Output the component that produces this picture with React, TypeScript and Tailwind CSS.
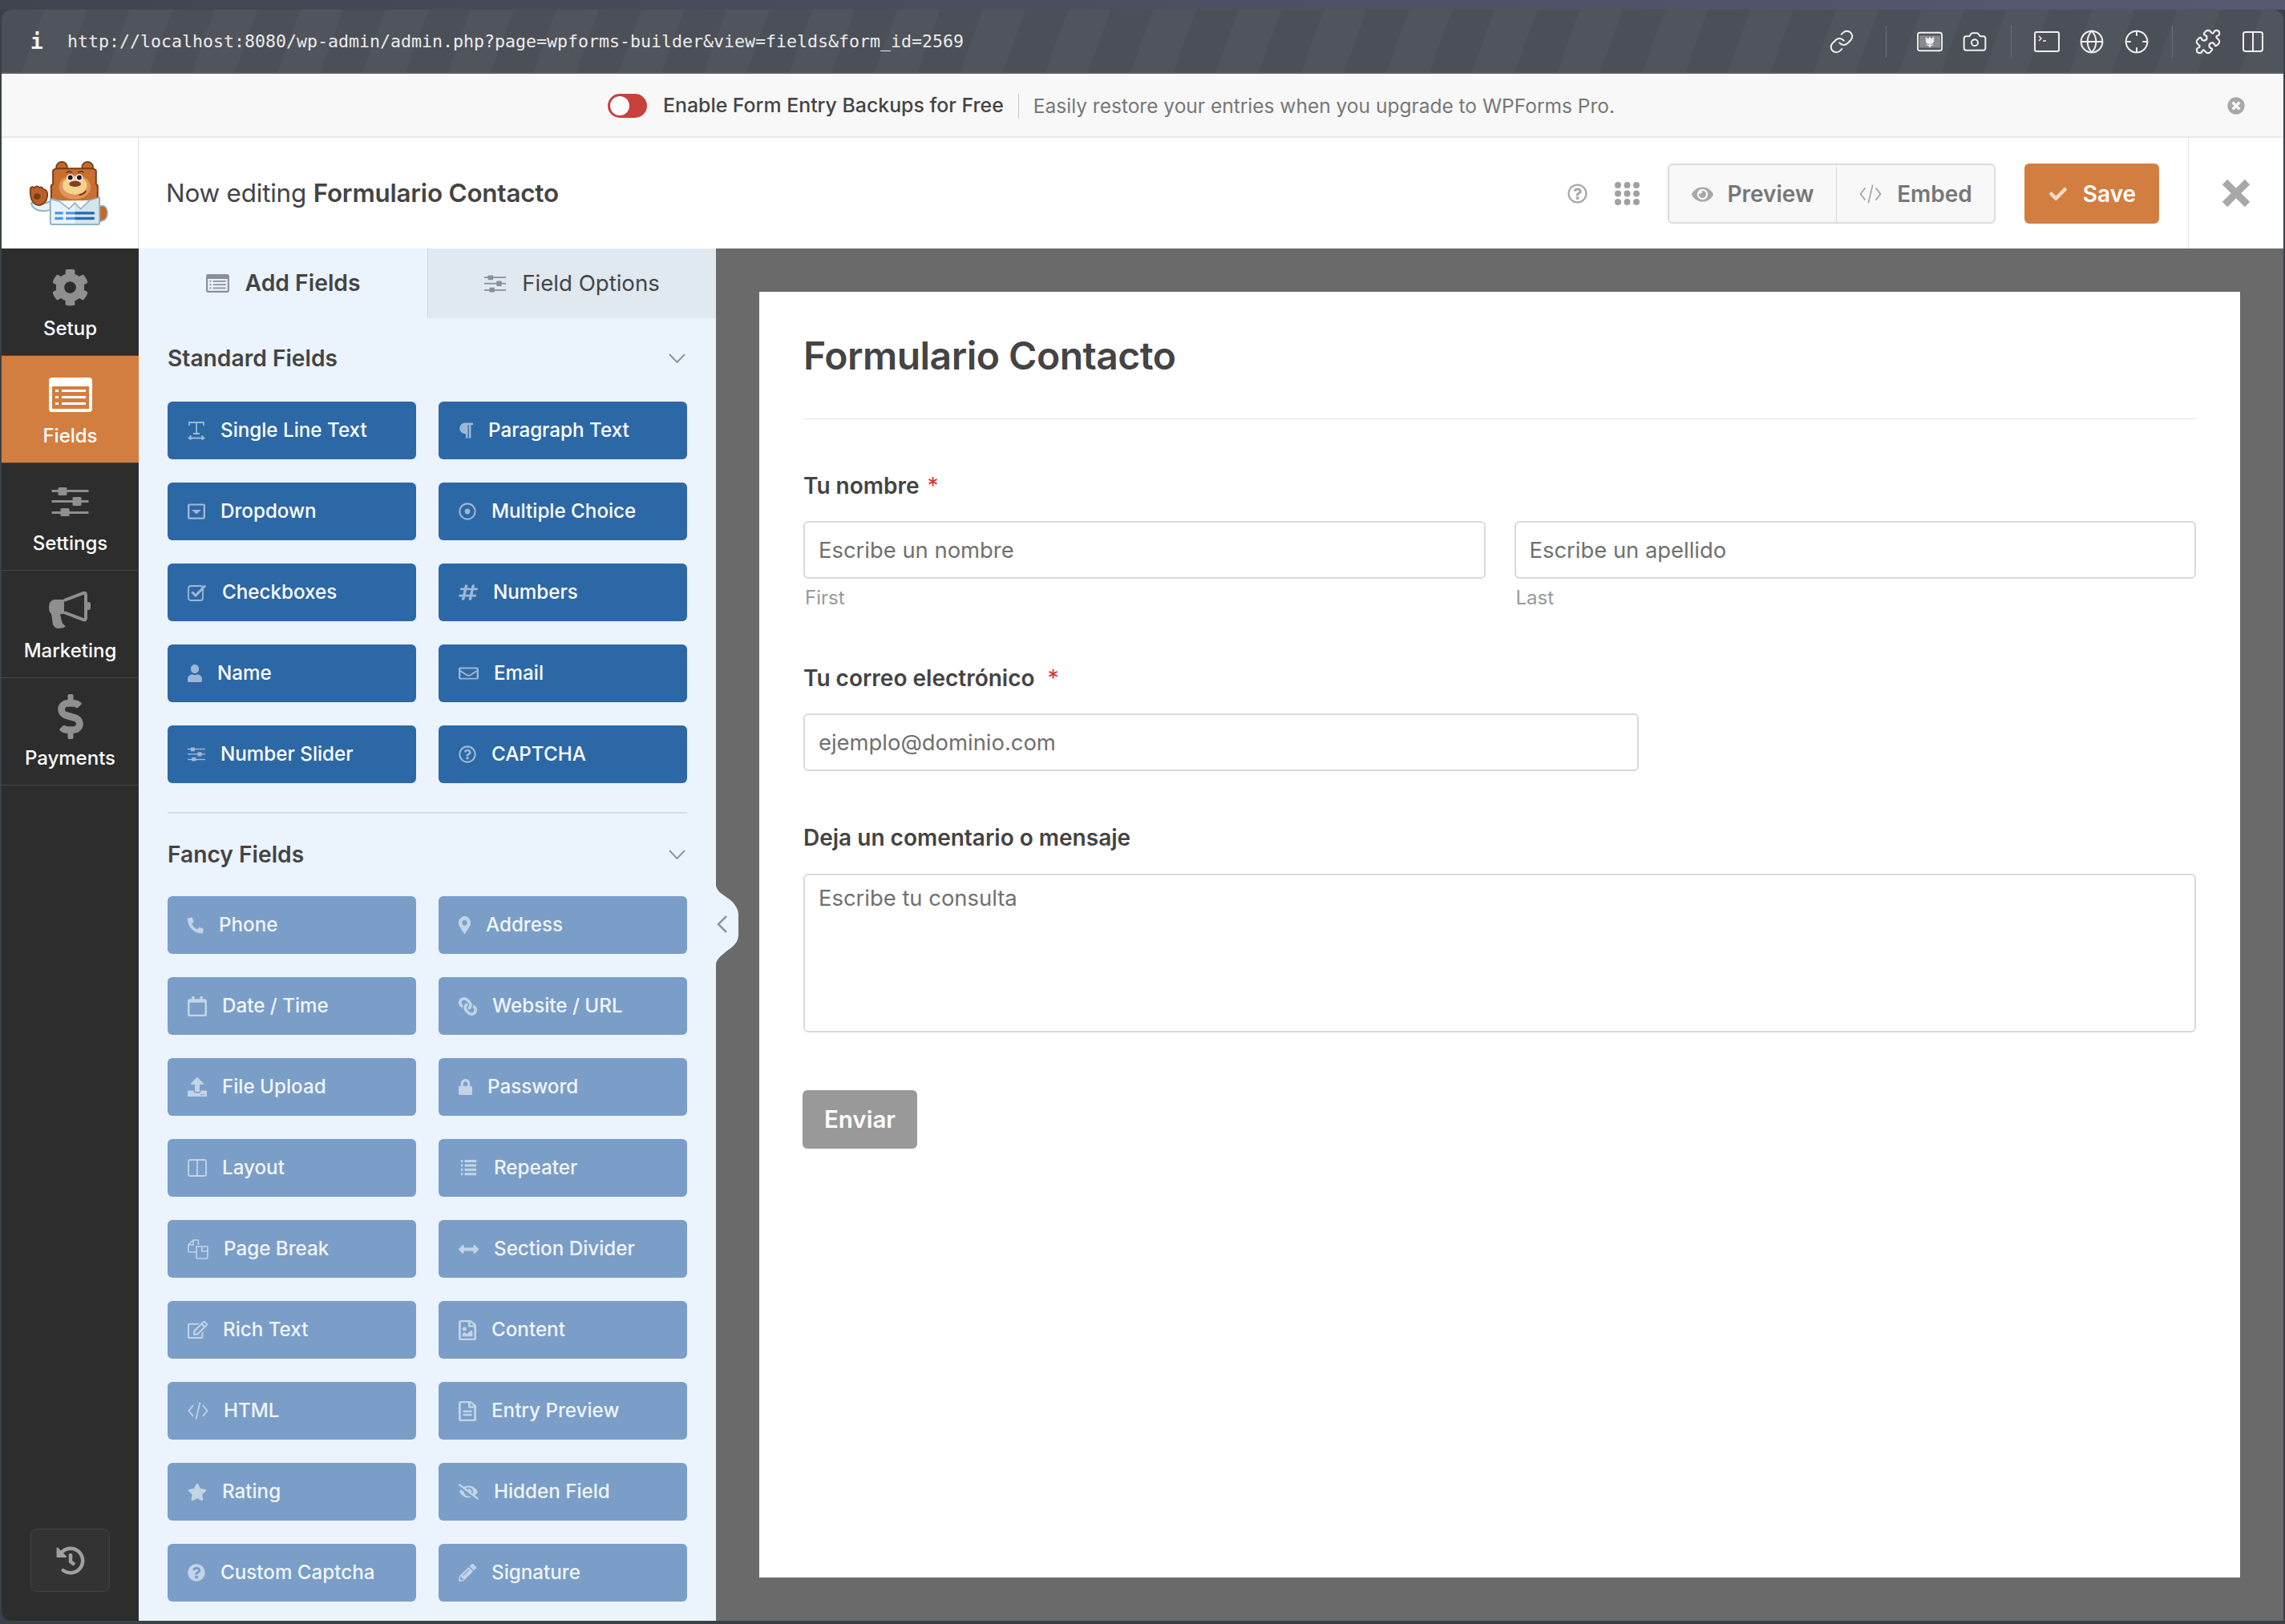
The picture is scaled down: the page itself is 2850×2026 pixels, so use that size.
import type { ReactNode } from "react";
import { Camera, Columns2, Crosshair, Globe, Link as LinkIcon, Puzzle } from "lucide-react";
import {
  FaArrowsAltH,
  FaCheck,
  FaCog,
  FaDollarSign,
  FaEye,
  FaEyeSlash,
  FaHashtag,
  FaHistory,
  FaLink,
  FaLock,
  FaMapMarkerAlt,
  FaParagraph,
  FaPencilAlt,
  FaPhoneAlt,
  FaQuestionCircle,
  FaRegCalendar,
  FaRegCaretSquareDown,
  FaRegDotCircle,
  FaRegEdit,
  FaRegEnvelope,
  FaRegFileAlt,
  FaRegFileImage,
  FaRegQuestionCircle,
  FaStar,
  FaTimesCircle,
  FaUpload,
  FaUser,
} from "react-icons/fa";

type Field = { label: string; icon: ReactNode; box: string };

function SliderIcon({ className }: { className?: string }) {
  return (
    <svg viewBox="0 0 46 36" fill="currentColor" className={className}>
      <rect x="0" y="3" width="46" height="3" />
      <rect x="8" y="0" width="11" height="10" rx="1.5" />
      <rect x="0" y="16" width="46" height="3" />
      <rect x="26" y="12" width="11" height="11" rx="1.5" />
      <rect x="0" y="30" width="46" height="3" />
      <rect x="11" y="26" width="11" height="10" rx="1.5" />
    </svg>
  );
}

function FormListIcon({ className }: { className?: string }) {
  return (
    <svg viewBox="0 0 54 43" className={className}>
      <path
        fill="currentColor"
        fillRule="evenodd"
        d="M4 0h46a4 4 0 0 1 4 4v35a4 4 0 0 1-4 4H4a4 4 0 0 1-4-4V4a4 4 0 0 1 4-4zM4 11v28h46V11zM8 15h4v3H8zM16 15h30v3H16zM8 23h4v3H8zM16 23h30v3H16zM8 31h4v3H8zM16 31h30v3H16z"
      />
    </svg>
  );
}

function CodeIcon({ className }: { className?: string }) {
  return (
    <svg viewBox="0 0 26 24" fill="none" stroke="currentColor" strokeWidth="1.7" className={className}>
      <path d="M7 5L1.5 12L7 19M19 5L24.5 12L19 19M15.5 1.5L10.5 22.5" />
    </svg>
  );
}

function TextLineIcon({ className }: { className?: string }) {
  return (
    <svg viewBox="0 0 22 24" fill="none" stroke="currentColor" strokeWidth="1.8" className={className}>
      <path d="M2 6V2h18v4M11 2v14M7 16h8M1.5 21.5h19M4.5 18.5l-3 3 3 2M17.5 18.5l3 3-3 2" />
    </svg>
  );
}

function CheckIcon({ className }: { className?: string }) {
  return (
    <svg viewBox="0 0 24 22" fill="none" stroke="currentColor" className={className}>
      <rect x="1" y="3" width="18" height="18" rx="3" strokeWidth="1.8" />
      <path d="M5.5 10.5l4.5 4.5L22 2.5" strokeWidth="3" />
    </svg>
  );
}

function LayoutIcon({ className }: { className?: string }) {
  return (
    <svg viewBox="0 0 24 22" fill="none" stroke="currentColor" strokeWidth="1.8" className={className}>
      <rect x="1" y="1" width="22" height="20" rx="2" />
      <path d="M12 1v20" />
    </svg>
  );
}

function RepeaterIcon({ className }: { className?: string }) {
  return (
    <svg viewBox="0 0 25 26" fill="currentColor" className={className}>
      <rect x="0" y="0" width="3" height="4" />
      <rect x="6" y="0" width="19" height="4" />
      <rect x="0" y="7" width="3" height="4" />
      <rect x="6" y="7" width="19" height="4" />
      <rect x="0" y="14" width="3" height="4" />
      <rect x="6" y="14" width="19" height="4" />
      <rect x="0" y="21" width="3" height="4" />
      <rect x="6" y="21" width="19" height="4" />
    </svg>
  );
}

function PagesIcon({ className }: { className?: string }) {
  return (
    <svg viewBox="0 0 26 25" fill="none" stroke="currentColor" strokeWidth="1.7" className={className}>
      <path d="M10 16H2.5a1.5 1.5 0 0 1-1.5-1.5V7l6-6h5a1.5 1.5 0 0 1 1.5 1.5V7M7 1v6H1" />
      <path d="M11 9h6l8 0v14a1.5 1.5 0 0 1-1.5 1H12.5a1.5 1.5 0 0 1-1.5-1zM18 9v6h7" />
    </svg>
  );
}

function BullhornIcon({ className }: { className?: string }) {
  return (
    <svg viewBox="0 0 55 47" className={className}>
      <path
        fill="currentColor"
        d="M1 20q0-8 7-9h12v18h-5l2 9q1 4 5 6-2 3-9 3-5 0-7-5l-2-13q-3-2-3-9z"
      />
      <path
        fill="none"
        stroke="currentColor"
        strokeWidth="4"
        d="M20 12L44 3q3-1 3 2v29q0 3-3 2L20 27"
      />
      <rect x="47" y="14" width="6" height="10" rx="3" fill="currentColor" />
    </svg>
  );
}

const standardFields: Field[] = [
  { label: "Single Line Text", icon: <TextLineIcon className="h-[24px] w-[22px]" />, box: "w-[22px]" },
  { label: "Paragraph Text", icon: <FaParagraph className="h-[22px] w-[18px]" preserveAspectRatio="none" />, box: "w-[18px]" },
  { label: "Dropdown", icon: <FaRegCaretSquareDown className="h-[22px] w-[22px]" preserveAspectRatio="none" />, box: "w-[22px]" },
  { label: "Multiple Choice", icon: <FaRegDotCircle className="h-[22px] w-[22px]" />, box: "w-[22px]" },
  { label: "Checkboxes", icon: <CheckIcon className="h-[22px] w-[24px]" />, box: "w-[24px]" },
  { label: "Numbers", icon: <FaHashtag className="h-[22px] w-[24px]" preserveAspectRatio="none" />, box: "w-[24px]" },
  { label: "Name", icon: <FaUser className="h-[22px] w-[18px]" preserveAspectRatio="none" />, box: "w-[18px]" },
  { label: "Email", icon: <FaRegEnvelope className="h-[20px] w-[25px]" preserveAspectRatio="none" />, box: "w-[25px]" },
  { label: "Number Slider", icon: <SliderIcon className="h-[20px] w-[22px]" />, box: "w-[22px]" },
  { label: "CAPTCHA", icon: <FaRegQuestionCircle className="h-[22px] w-[22px]" />, box: "w-[22px]" },
];

const fancyFields: Field[] = [
  { label: "Phone", icon: <FaPhoneAlt className="h-[21px] w-[20px]" />, box: "w-[20px]" },
  { label: "Address", icon: <FaMapMarkerAlt className="h-[22px] w-[15px]" preserveAspectRatio="none" />, box: "w-[15px]" },
  { label: "Date / Time", icon: <FaRegCalendar className="h-[25px] w-[24px]" preserveAspectRatio="none" />, box: "w-[24px]" },
  { label: "Website / URL", icon: <FaLink className="h-[23px] w-[23px] -scale-x-100" />, box: "w-[23px]" },
  { label: "File Upload", icon: <FaUpload className="h-[24px] w-[24px]" />, box: "w-[24px]" },
  { label: "Password", icon: <FaLock className="h-[20px] w-[17px]" preserveAspectRatio="none" />, box: "w-[17px]" },
  { label: "Layout", icon: <LayoutIcon className="h-[22px] w-[24px]" />, box: "w-[24px]" },
  { label: "Repeater", icon: <RepeaterIcon className="h-[20px] w-[25px]" />, box: "w-[25px]" },
  { label: "Page Break", icon: <PagesIcon className="h-[25px] w-[26px]" />, box: "w-[26px]" },
  { label: "Section Divider", icon: <FaArrowsAltH className="h-[25px] w-[25px]" />, box: "w-[25px]" },
  { label: "Rich Text", icon: <FaRegEdit className="h-[24px] w-[25px]" />, box: "w-[25px]" },
  { label: "Content", icon: <FaRegFileImage className="h-[25px] w-[22px]" preserveAspectRatio="none" />, box: "w-[22px]" },
  { label: "HTML", icon: <CodeIcon className="h-[24px] w-[26px]" />, box: "w-[26px]" },
  { label: "Entry Preview", icon: <FaRegFileAlt className="h-[25px] w-[22px]" preserveAspectRatio="none" />, box: "w-[22px]" },
  { label: "Rating", icon: <FaStar className="h-[23px] w-[24px]" />, box: "w-[24px]" },
  { label: "Hidden Field", icon: <FaEyeSlash className="h-[20px] w-[25px]" />, box: "w-[25px]" },
  { label: "Custom Captcha", icon: <FaQuestionCircle className="h-[22px] w-[22px]" />, box: "w-[22px]" },
  { label: "Signature", icon: <FaPencilAlt className="h-[22px] w-[22px]" />, box: "w-[22px]" },
];

function BearLogo() {
  return (
    <svg viewBox="100 90 320 250" className="h-[84px] w-[106px]">
      <path d="M388 262c22 6 24 50-4 58l-10 2v-58z" fill="#c4682b" stroke="#8fb4c5" strokeWidth="5" />
      <path d="M118 252c4 26 36 36 72 26v-32c-20 8-40 14-60 0z" fill="#eaf3f8" stroke="#8fb4c5" strokeWidth="6" />
      <circle cx="233" cy="118" r="21" fill="#c4682b" stroke="#7a3d17" strokeWidth="5" />
      <circle cx="330" cy="118" r="21" fill="#c4682b" stroke="#7a3d17" strokeWidth="5" />
      <path
        d="M200 130q5-8 18-8h126q13 0 18 8v50l6 6v62H193v-62l7-6z"
        fill="#c96f30"
        stroke="#7a3d17"
        strokeWidth="6"
      />
      <ellipse cx="282" cy="192" rx="60" ry="46" fill="#e0955c" />
      <ellipse cx="282" cy="186" rx="46" ry="34" fill="#f5d38f" />
      <path d="M250 138q12-10 22 0M294 138q12-10 22 0" stroke="#6b3413" strokeWidth="5" fill="none" />
      <circle cx="265" cy="156" r="13" fill="#fff" />
      <circle cx="265" cy="156" r="9" fill="#1d1d2b" />
      <circle cx="299" cy="156" r="13" fill="#fff" />
      <circle cx="299" cy="156" r="9" fill="#1d1d2b" />
      <ellipse cx="283" cy="180" rx="22" ry="11" fill="#7d4029" />
      <path d="M298 222q18-2 26-16" stroke="#6b3413" strokeWidth="5" fill="none" />
      <path d="M190 236q92 28 185-4v94q0 7-7 7H197q-7 0-7-7z" fill="#eaf3f8" stroke="#8fb4c5" strokeWidth="6" />
      <path d="M282 250q46 0 90-16v90q0 6-6 6h-84z" fill="#d4e5ee" />
      <path d="M222 244l38 30 22-22 22 22 34-32" fill="#fff" stroke="#8fb4c5" strokeWidth="5" />
      <rect x="207" y="285" width="31" height="10" fill="#4c9be8" />
      <rect x="248" y="285" width="34" height="10" fill="#4c9be8" />
      <rect x="282" y="285" width="74" height="10" fill="#2b68aa" />
      <rect x="207" y="305" width="31" height="10" fill="#4c9be8" />
      <rect x="248" y="305" width="34" height="10" fill="#4c9be8" />
      <rect x="282" y="305" width="74" height="10" fill="#2b68aa" />
      <path
        d="M115 195q8-8 14 0 8-12 20-2 10-4 14 6 14 2 16 16 2 26-16 40-22 14-38-6-14-18-10-54z"
        fill="#b8602a"
        stroke="#7a3d17"
        strokeWidth="5"
      />
      <ellipse cx="140" cy="228" rx="13" ry="12" fill="#7a3d17" />
    </svg>
  );
}

function NavItem({ label, icon, active }: { label: string; icon: ReactNode; active?: boolean }) {
  return (
    <div
      className={
        active
          ? "flex h-[134px] flex-col items-center border-b border-[#454545] bg-[#d37e41] text-white"
          : "flex h-[134px] flex-col items-center border-b border-[#454545] text-[#8f8f8f]"
      }
    >
      <div className="flex h-[85px] items-center pt-[11px]">{icon}</div>
      <div className="text-[24px] leading-[30px] font-medium text-white">{label}</div>
    </div>
  );
}

function FieldButton({ field, light }: { field: Field; light?: boolean }) {
  return (
    <div
      className={
        light
          ? "flex h-[72px] items-center gap-[19px] rounded-[6px] bg-[#7a9ec8] pl-[25px] text-[24.2px] font-medium text-[#f0f5fa]"
          : "flex h-[72px] items-center gap-[19px] rounded-[6px] bg-[#2d68a6] pl-[25px] text-[24.2px] font-medium text-white"
      }
    >
      <span
        className={
          light
            ? `flex shrink-0 items-center justify-center text-[#c3d4e6] ${field.box}`
            : `flex shrink-0 items-center justify-center text-[#9cb8d6] ${field.box}`
        }
      >
        {field.icon}
      </span>
      <span>{field.label}</span>
    </div>
  );
}

function FieldGroup({ title, fields, light, gridGap }: { title: string; fields: Field[]; light?: boolean; gridGap: string }) {
  return (
    <div>
      <div className="flex h-[36px] items-center justify-between">
        <span className="text-[28.2px] font-semibold text-[#444444]">{title}</span>
        <svg viewBox="0 0 21 12" fill="none" stroke="#8b95a3" strokeWidth="2" className="mr-[2px] h-[12px] w-[21px]">
          <path d="M1 1L10.5 11L20 1" />
        </svg>
      </div>
      <div className={`${gridGap} grid grid-cols-2 gap-x-[28px] gap-y-[29px]`}>
        {fields.map((f) => (
          <FieldButton key={f.label} field={f} light={light} />
        ))}
      </div>
    </div>
  );
}

function Label({ text, gap }: { text: string; gap: string }) {
  return (
    <div className="flex h-[32px] items-center text-[28px] font-semibold text-[#444444]">
      <span>{text}</span>
      <span className={`${gap} font-normal text-[#cc3a3a]`}>*</span>
    </div>
  );
}

function TextBox({ text, className }: { text: string; className: string }) {
  return (
    <div className={`rounded-[6px] border-2 border-[#dadada] px-[17px] text-[27.4px] text-[#707070] ${className}`}>
      {text}
    </div>
  );
}

export default function App() {
  return (
    <div className="flex h-[2026px] w-[2850px] flex-col overflow-hidden bg-[#3b4048] pr-[2px] pb-[4px] pl-[2px] font-['Inter',sans-serif]">
      <div className="-mx-[2px] h-[12px] shrink-0 bg-gradient-to-r from-[#41444f] via-[#4c4f62] to-[#565970]" />

      {/* browser toolbar */}
      <div className="flex h-[80px] shrink-0 items-start rounded-t-[14px] border-b-2 border-[#5a5d64] bg-[#4c5058] bg-[repeating-linear-gradient(110deg,#4b4f57_0px,#4b4f57_50px,#50545c_50px,#50545c_100px)] pt-[17px] pr-[22px] pl-[36px] text-[#f2f2f2]">
        <span className="w-[46px] font-['DejaVu_Sans_Mono',monospace] text-[26px] leading-[46px] font-bold">i</span>
        <span className="font-['DejaVu_Sans_Mono',monospace] text-[21.6px] leading-[46px] text-[#ececec]">
          http://localhost:8080/wp-admin/admin.php?page=wpforms-builder&amp;view=fields&amp;form_id=2569
        </span>
        <div className="ml-auto flex h-[46px] items-center text-[#efefef]">
          <LinkIcon className="h-[32px] w-[32px]" strokeWidth={1.5} />
          <span className="mr-[38px] ml-[39px] h-[40px] w-px bg-[#6d7077]" />
          <svg viewBox="0 0 34 26" fill="none" className="h-[26px] w-[32px]">
            <rect x="1" y="1" width="32" height="24" rx="3" stroke="currentColor" strokeWidth="2" />
            <rect x="3" y="5" width="28" height="16" fill="currentColor" fillOpacity="0.35" />
            <path d="M12 7l2.5 3L17 7l2.5 3L22 7v5q0 4-5 4t-5-4zM17 16v5M12 17q3 0 5 3 2-3 5-3" fill="currentColor" stroke="currentColor" strokeWidth="0.8" />
          </svg>
          <Camera className="ml-[24px] h-[32px] w-[32px]" strokeWidth={1.5} />
          <span className="mr-[28px] ml-[29px] h-[40px] w-px bg-[#6d7077]" />
          <svg viewBox="0 0 32 26" fill="none" stroke="currentColor" strokeWidth="2" className="h-[26px] w-[32px]">
            <rect x="1" y="1" width="30" height="24" rx="2" />
            <path d="M6 6l3 3-3 3M11 12h4" strokeWidth="1.5" />
          </svg>
          <Globe className="ml-[24px] h-[32px] w-[32px]" strokeWidth={1.5} />
          <Crosshair className="ml-[24px] h-[32px] w-[32px]" strokeWidth={1.5} />
          <span className="mr-[27px] ml-[28px] h-[40px] w-px bg-[#6d7077]" />
          <Puzzle className="h-[34px] w-[34px]" strokeWidth={1.5} />
          <Columns2 className="ml-[23px] h-[32px] w-[32px]" strokeWidth={1.5} />
        </div>
      </div>

      {/* notice */}
      <div className="relative flex h-[80px] shrink-0 items-center justify-center border-b-2 border-[#e8e8e8] bg-[#f8f8f8] pt-[2px] pr-[78px] text-[24.5px]">
        <span className="flex h-[30px] w-[49px] items-center rounded-full bg-[#c8423d] pl-[3px]">
          <span className="h-[24px] w-[24px] rounded-full bg-white" />
        </span>
        <span className="ml-[20px] text-[24.85px] font-medium text-[#444444]">Enable Form Entry Backups for Free</span>
        <span className="mx-[18px] h-[30px] w-px bg-[#c8c8c8]" />
        <span className="text-[#777777]">Easily restore your entries when you upgrade to WPForms Pro.</span>
        <FaTimesCircle className="absolute top-[29px] right-[48px] h-[22px] w-[22px] text-[#a8a8a8]" />
      </div>

      {/* builder header */}
      <div className="flex h-[138px] shrink-0 items-center bg-white">
        <div className="flex h-full w-[171px] items-center justify-center border-r border-[#e2e2e2] pr-[2px]">
          <BearLogo />
        </div>
        <div className="ml-[34px] pt-[2px] text-[31.4px] tracking-[-0.2px] text-[#444444]">
          Now editing <span className="font-semibold">Formulario Contacto</span>
        </div>
        <div className="ml-auto flex h-full items-center">
          <FaRegQuestionCircle className="h-[25px] w-[25px] text-[#a8a8a8]" />
          <svg viewBox="0 0 31 29" fill="#a0a0a0" className="ml-[34px] h-[29px] w-[31px]">
            {[4, 15.5, 27].map((x) =>
              [4, 14.5, 25].map((y) => <circle key={`${x}-${y}`} cx={x} cy={y} r="4" />),
            )}
          </svg>
          <div className="ml-[35px] flex h-[75px] w-[409px] rounded-[6px] border-2 border-[#dcdcdc] bg-[#f8f8f8] pt-[2px] text-[28px] font-semibold text-[#777777]">
            <div className="flex w-[209px] items-center justify-center gap-[18px] border-r border-[#d8d8d8]">
              <FaEye className="h-[25px] w-[27px] text-[#a8a8a8]" />
              Preview
            </div>
            <div className="flex flex-1 items-center justify-center gap-[18px]">
              <CodeIcon className="h-[26px] w-[30px] text-[#a8a8a8]" />
              Embed
            </div>
          </div>
          <div className="ml-[36px] flex h-[75px] w-[168px] items-center justify-center gap-[18px] rounded-[6px] bg-[#d37e41] pt-[2px] text-[28px] font-semibold text-white">
            <FaCheck className="h-[22px] w-[26px] text-[#f3dccb]" />
            Save
          </div>
          <div className="ml-[36px] flex h-full w-[119px] items-center justify-center border-l border-[#e2e2e2]">
            <svg viewBox="0 0 36 34" fill="none" stroke="#a8a8a8" strokeWidth="9" className="h-[34px] w-[36px]">
              <path d="M4 3L32 31M32 3L4 31" />
            </svg>
          </div>
        </div>
      </div>

      {/* builder body */}
      <div className="flex min-h-0 flex-1">
        <div className="flex w-[171px] shrink-0 flex-col rounded-bl-[12px] bg-[#2d2d2d]">
          <NavItem label="Setup" icon={<FaCog className="h-[47px] w-[47px]" />} />
          <NavItem label="Fields" active icon={<FormListIcon className="h-[43px] w-[54px]" />} />
          <NavItem label="Settings" icon={<SliderIcon className="h-[36px] w-[47px]" />} />
          <NavItem label="Marketing" icon={<BullhornIcon className="h-[47px] w-[55px]" />} />
          <NavItem label="Payments" icon={<FaDollarSign className="h-[56px] w-[32px]" />} />
          <div className="mt-auto mb-[36px] ml-[36px] flex h-[79px] w-[99px] items-center justify-center rounded-[8px] border border-[#444444] bg-[#333333]">
            <FaHistory className="h-[36px] w-[38px] text-[#a0a0a0]" />
          </div>
        </div>

        <div className="flex w-[720px] shrink-0 flex-col overflow-hidden bg-[#ebf3fc]">
          <div className="flex h-[87px] shrink-0">
            <div className="flex w-[360px] items-center justify-center gap-[20px] text-[28.3px] font-semibold text-[#444444]">
              <FormListIcon className="h-[23px] w-[29px] text-[#8a8f96]" />
              Add Fields
            </div>
            <div className="flex flex-1 items-center justify-center gap-[20px] border-l border-[#cfd8e2] bg-[#e0e8f0] text-[27.6px] text-[#444444]">
              <SliderIcon className="h-[22px] w-[27px] text-[#8a8f96]" />
              Field Options
            </div>
          </div>
          <div className="px-[36px] pt-[32px]">
            <FieldGroup title="Standard Fields" fields={standardFields} gridGap="mt-[36px]" />
            <div className="mt-[36px] mb-[33px] h-[2px] bg-[#d5dee8]" />
            <FieldGroup title="Fancy Fields" fields={fancyFields} gridGap="mt-[34px]" light />
          </div>
        </div>

        <div className="relative flex min-w-0 flex-1 bg-[#6a6a6a] p-[54px]">
          {/* collapse handle */}
          <svg viewBox="0 0 28 97" className="absolute top-[795px] left-0 h-[97px] w-[28px]">
            <path fill="#ebf3fc" d="M0 0C2 8 8 10 14 15C22 20 28 28 28 36V61C28 70 22 76 14 81C8 86 2 90 0 97Z" />
            <path fill="none" stroke="#8b95a3" strokeWidth="2.5" d="M13 38L3 48L13 58" />
          </svg>
          <div className="flex-1 bg-white pt-[50px] pr-[55px] pl-[55px]">
            <div className="h-[60px] text-[48px] leading-[60px] font-semibold tracking-[-0.5px] text-[#444444]">
              Formulario Contacto
            </div>
            <div className="mt-[48px] mb-[67px] h-px bg-[#e2e2e2]" />
            <Label text="Tu nombre" gap="ml-[10px]" />
            <div className="mt-[28px] grid grid-cols-2 gap-x-[36px]">
              <div>
                <TextBox text="Escribe un nombre" className="flex h-[72px] items-center pt-[2px]" />
                <div className="mt-[12px] h-[24px] pl-[2px] text-[24px] leading-[24px] text-[#999999]">First</div>
              </div>
              <div>
                <TextBox text="Escribe un apellido" className="flex h-[72px] items-center pt-[2px]" />
                <div className="mt-[12px] h-[24px] pl-[2px] text-[24px] leading-[24px] text-[#999999]">Last</div>
              </div>
            </div>
            <div className="mt-[72px]">
              <Label text="Tu correo electrónico" gap="ml-[16px]" />
            </div>
            <TextBox text="ejemplo@dominio.com" className="mt-[28px] flex h-[72px] w-[1042px] items-center pt-[2px]" />
            <div className="mt-[67px]">
              <Label text="Deja un comentario o mensaje" gap="hidden" />
            </div>
            <TextBox text="Escribe tu consulta" className="mt-[29px] h-[198px] pt-[8px]" />
            <div className="mt-[72px] -ml-[1px] flex h-[73px] w-[143px] items-center justify-center rounded-[6px] bg-[#999999] text-[29.5px] font-semibold text-white">
              Enviar
            </div>
          </div>
        </div>
      </div>
    </div>
  );
}
